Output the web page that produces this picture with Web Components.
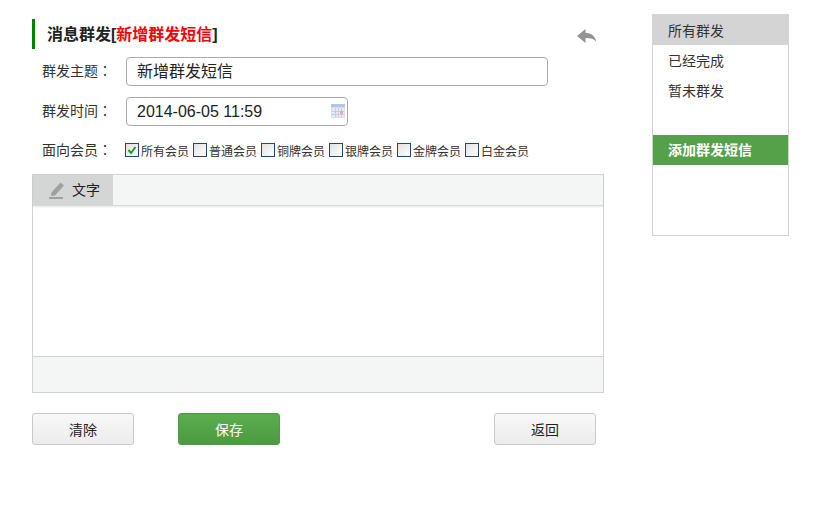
<!DOCTYPE html>
<html lang="zh"><head><meta charset="utf-8">
<style>
html,body{margin:0;padding:0;background:#fff;height:511px;overflow:hidden}
body{font-family:"Liberation Sans","Noto Sans CJK SC",sans-serif;color:#333}
</style></head><body>
<app-page>
  <main-form>
    <page-title main="消息群发" sub="新增群发短信"></page-title>
    <form-row label="群发主题"><text-box value="新增群发短信" w="422" zh></text-box></form-row>
    <form-row label="群发时间"><text-box value="2014-06-05 11:59" w="222" cal></text-box></form-row>
    <member-row label="面向会员">
      <check-item checked>所有会员</check-item><check-item>普通会员</check-item><check-item>铜牌会员</check-item><check-item>银牌会员</check-item><check-item>金牌会员</check-item><check-item>白金会员</check-item>
    </member-row>
    <editor-box></editor-box>
    <button-bar></button-bar>
  </main-form>
  <side-menu></side-menu>
</app-page>
<script>
function def(name, css, html){
  customElements.define(name, class extends HTMLElement{
    constructor(){super();this.attachShadow({mode:'open'});}
    connectedCallback(){
      const h = typeof html==='function'?html(this):html;
      this.shadowRoot.innerHTML='<style>'+css+'</style>'+h;
    }
  });
}
const colon='<span style="display:inline-block;width:11px;font-family:\'Liberation Sans\',\'Noto Sans CJK TC\',sans-serif">：</span>';
def('app-page',':host{display:flex;align-items:flex-start;padding:14px 0 0 32px}','<slot></slot>');
def('main-form',':host{display:block;width:572px;margin-right:48px}','<slot></slot>');
def('page-title',`
:host{display:flex;align-items:center;height:30px;margin-top:5px;position:relative;border-left:3px solid #008000;padding-left:12px;width:572px;box-sizing:border-box}
h1{margin:0;font-size:16px;line-height:32px;height:30px;font-weight:bold;color:#222}
em{font-style:normal;color:#f00}
svg{position:absolute;right:6px;top:9px}
`, el=>`<h1>${el.getAttribute('main')}[<em>${el.getAttribute('sub')}</em>]</h1>
<svg width="22" height="16" viewBox="0 0 22 16"><path d="M1 8 9.5 1v3.8c5.2 .2 9.4 3 10.8 8.7-2.8-2.6-6-3.6-10.8-3.4V15z" fill="#949494"/></svg>`);
def('form-row',`
:host{display:flex;align-items:center;height:29px;margin-top:11px;padding-left:10px}
:host(:nth-of-type(1)){margin-top:8px}
label{width:84px;font-size:14px;color:#333;flex:none;white-space:nowrap;margin-bottom:4px}
`, el=>`<label>${el.getAttribute('label')}${colon}</label><slot></slot>`);
def('text-box',`
:host{display:block;height:29px;box-sizing:border-box;border:1px solid #aaa;border-radius:4px;position:relative;padding-left:10px;font-size:16px;line-height:27px;color:#222}
svg{position:absolute;right:2px;top:6px}
`, el=>{
  el.style.width=el.getAttribute('w')+'px';
  const cal=el.hasAttribute('cal')?`<svg width="14" height="14" viewBox="0 0 14 14" shape-rendering="crispEdges"><rect width="14" height="14" fill="#d8deec"/><rect width="14" height="3" fill="#b4c6e8"/><rect x="1" y="4" width="12" height="9" fill="#e6ebf6"/><path d="M4 4v9M7 4v9M10 4v9M1 7h12M1 10h12" stroke="#c2cee6" fill="none"/><rect x="9" y="7" width="3" height="3" fill="#efa99e"/></svg>`:'';
  return `<span>${el.getAttribute('value')}</span>${cal}`;
});
def('member-row',`
:host{display:flex;align-items:center;height:20px;margin-top:14px;padding-left:10px}
label{width:83px;font-size:14px;flex:none;white-space:nowrap;margin-bottom:2px}
`, el=>`<label>${el.getAttribute('label')}${colon}</label><slot></slot>`);
def('check-item',`
:host{display:flex;align-items:center;width:68px;font-size:12px;color:#333;flex:none}
i{display:block;width:12px;height:12px;border:1px solid #24486b;background:linear-gradient(135deg,#e2e2e2,#fff);margin-right:2px;flex:none;position:relative}
svg{position:absolute;left:1px;top:1px}
`, el=>`<i>${el.hasAttribute('checked')?'<svg width="10" height="10" viewBox="0 0 10 10"><path d="M1.5 5 4 8l4.5-6" fill="none" stroke="#1f9a2e" stroke-width="2"/></svg>':''}</i><span><slot></slot></span>`);
def('editor-box',`
:host{margin-top:14px;height:219px;box-sizing:border-box;border:1px solid #d2d2d2;display:flex;flex-direction:column}
.bar{height:30px;background:#f4f5f5;flex:none;border-bottom:1px solid #d8d8d8;box-shadow:0 1px 2px rgba(0,0,0,.1);position:relative}
.tab{width:80px;height:30px;background:#d4d6d6;display:flex;align-items:center;font-size:14px;color:#222;padding-left:16px;box-sizing:border-box}
.tab span{display:block;height:30px;line-height:30px;margin-top:-1px}
.tab svg{margin-right:6px}
.body{flex:1;background:#fff}
.foot{height:35px;flex:none;border-top:1px solid #d2d2d2;background:#f4f5f5}
`, `<div class="bar"><div class="tab"><svg width="17" height="18" viewBox="0 0 17 18"><path d="M2.5 11.5 11.5 1.5 15 4.5 6 14.5 2 15z" fill="#a0a0a0"/><rect x="0" y="16" width="14" height="2" fill="#a0a0a0"/></svg><span>文字</span></div></div><div class="body"></div><div class="foot"></div>`);
def('button-bar',`
:host{display:flex;margin-top:20px}
button{display:block;width:102px;height:32px;box-sizing:border-box;border:1px solid #c9c9c9;border-radius:3px;background:linear-gradient(#f8f8f8,#ececec);font:14px "Liberation Sans","Noto Sans CJK SC",sans-serif;color:#222;padding:0}
.g{background:linear-gradient(#5cad50,#4b9a40);border-color:#4e9c44;color:#fff;margin-left:44px}
.r{margin-left:214px}
`, `<button>清除</button><button class="g">保存</button><button class="r">返回</button>`);
def('side-menu',`
:host{display:block;width:137px;height:222px;box-sizing:border-box;border:1px solid #d2d2d2;border-top:0;flex:none;font-size:14px;color:#333}
div{height:30px;line-height:32px;padding-left:15px}
.on{background:#d4d4d4;margin:0 -1px;padding-left:16px;height:31px;line-height:34px}
.add{background:#55a14a;color:#fff;font-weight:bold;margin-top:30px;line-height:30px}
`, `<div class="on">所有群发</div><div>已经完成</div><div>暂未群发</div><div class="add">添加群发短信</div>`);
</script>
</body></html>
